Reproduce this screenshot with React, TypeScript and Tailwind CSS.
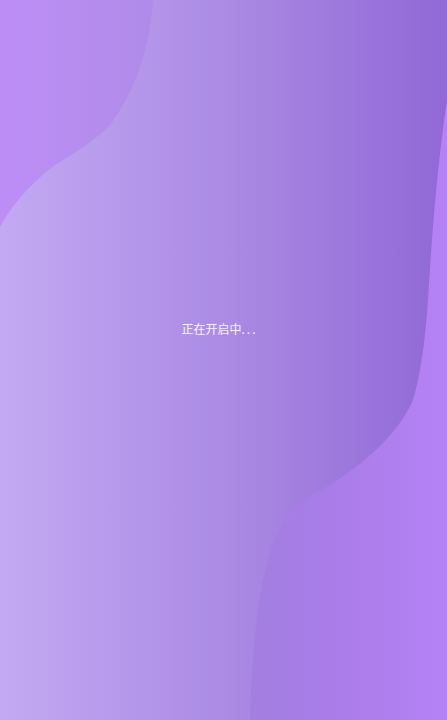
export default function App() {
  return (
    <div className="relative h-[720px] w-[447px] overflow-hidden bg-[#ad86ec]">
      {/* wavy backdrop */}
      <svg
        className="absolute inset-0"
        width="447"
        height="720"
        viewBox="0 0 447 720"
        aria-hidden="true"
      >
        <defs>
          <linearGradient id="outer" gradientUnits="userSpaceOnUse" x1="0" y1="0" x2="447" y2="0">
            <stop offset="0" stopColor="#bd8ef6" />
            <stop offset="0.34" stopColor="#b08be9" />
            <stop offset="0.56" stopColor="#a27fe0" />
            <stop offset="0.74" stopColor="#a97ce8" />
            <stop offset="1" stopColor="#b582f5" />
          </linearGradient>
          <linearGradient id="inner" gradientUnits="userSpaceOnUse" x1="0" y1="0" x2="447" y2="0">
            <stop offset="0" stopColor="#c3a9f3" />
            <stop offset="0.5" stopColor="#ab8be4" />
            <stop offset="1" stopColor="#9168d6" />
          </linearGradient>
        </defs>
        <rect width="447" height="720" fill="url(#outer)" />
        <path
          d="M153,0 C150,40 140,85 110,125 C95,140 80,150 55,165 C35,180 15,200 0,227 L0,720 L250,720 C252,650 258,580 275,540 C285,515 300,500 330,485 C370,460 400,430 413,400 C422,370 426,330 428,300 C432,230 438,160 447,100 L447,0 Z"
          fill="url(#inner)"
        />
      </svg>

      <div className="relative flex flex-col items-center pt-[321px] pr-[8px]">
        <p className="text-[12px] leading-4 text-white/90 font-['Noto_Sans_CJK_SC',sans-serif]">
          正在开启中<span className="tracking-[2px]">...</span>
        </p>
      </div>
    </div>
  )
}
